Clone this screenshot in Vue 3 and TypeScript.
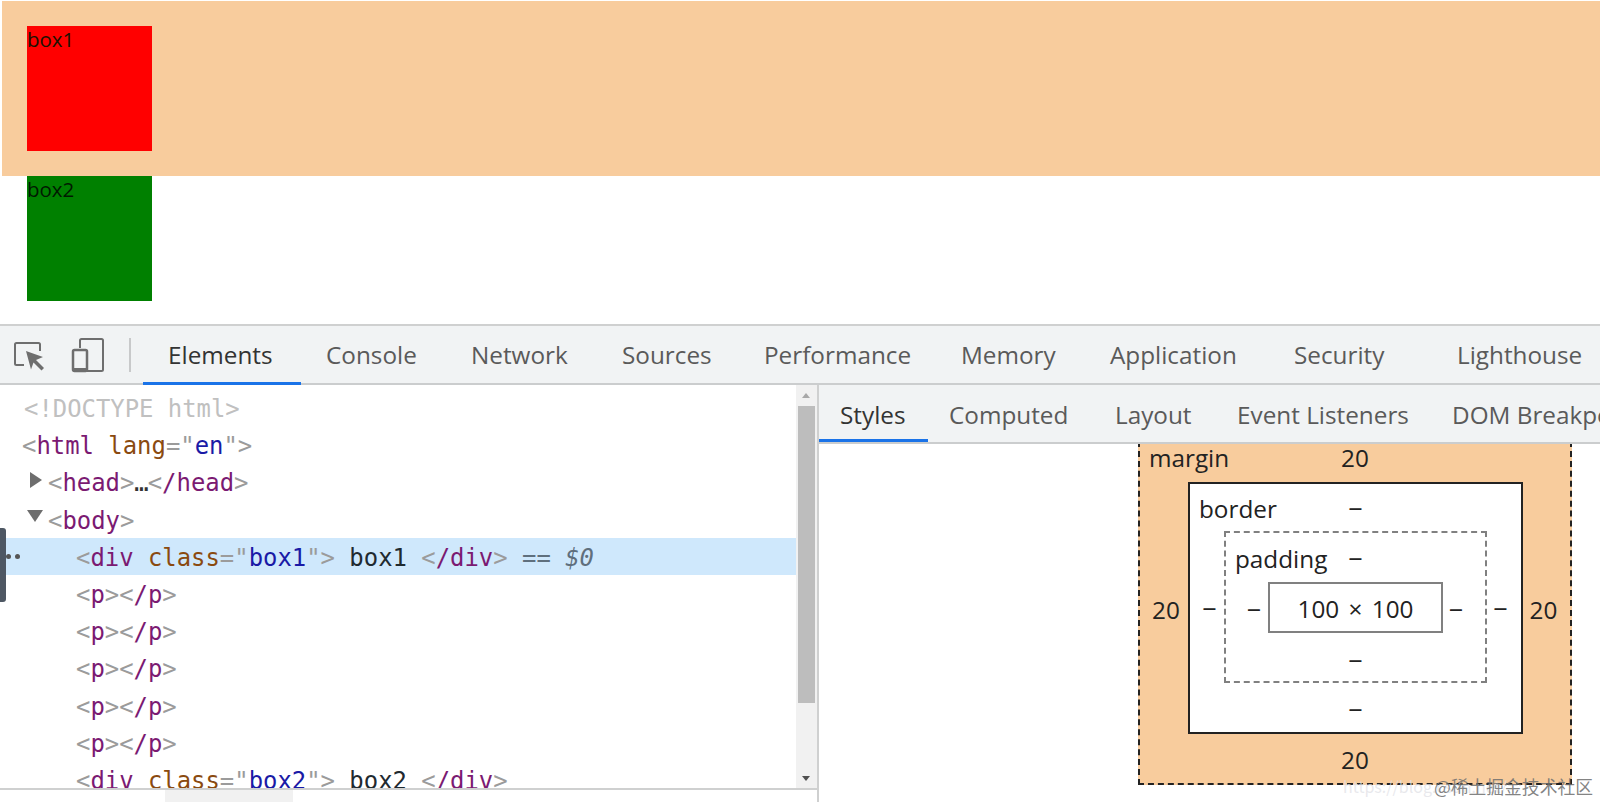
<template>
    <div class="page">
        <div class="preview">
            <div class="box1">
                <div class="box box-red">box1</div>
            </div>
            <div class="box box-green">box2</div>
        </div>

        <div class="devtools">
            <div class="main-bar">
                <div class="tool-icons">
                    <svg class="tool-icon" width="32" height="32" viewBox="0 0 32 32">
                        <path d="M11 26H3.500a1.500 1.500 0 0 1-1.500-1.500V5.500A1.500 1.500 0 0 1 3.500 4h22A1.500 1.500 0 0 1 27 5.500V12" fill="none" stroke="#6e6e6e" stroke-width="2" />
                        <path d="M13 12l17 6-7 3 8 8-2.500 2.500-8-8-2.500 7z" fill="#6e6e6e" />
                    </svg>
                    <svg class="tool-icon device" width="34" height="36" viewBox="0 0 34 36">
                        <path d="M9 11V3.500A1.500 1.500 0 0 1 10.500 2h20A1.500 1.500 0 0 1 32 3.500v29a1.500 1.500 0 0 1-1.500 1.500H16" fill="none" stroke="#6e6e6e" stroke-width="2" />
                        <rect x="2" y="13" width="14" height="21" rx="1.500" fill="none" stroke="#6e6e6e" stroke-width="2.500" />
                        <rect x="2" y="31" width="14" height="3" fill="#6e6e6e" />
                    </svg>
                    <span class="tool-sep"></span>
                </div>
                <div
                    v-for="tab in mainTabs"
                    :key="tab.name"
                    class="tab"
                    :class="{ active: tab.name === 'Elements' }"
                    :style="{ width: tab.width + 'px' }"
                >
                    {{ tab.name }}
                </div>
            </div>

            <div class="panes">
                <div class="dom-pane">
                    <div class="dom-main">
                        <div class="dom-lines">
                            <div class="dom-row doctype indent-0">&lt;!DOCTYPE html&gt;</div>
                            <div class="dom-row indent-root">
                                <i>&lt;</i><b>html</b> <em>lang</em><i>="</i><u>en</u><i>"&gt;</i>
                            </div>
                            <div class="dom-row indent-1">
                                <span class="arrow right"></span>
                                <i>&lt;</i><b>head</b><i>&gt;</i><span class="dots">…</span><i>&lt;</i><b>/head</b><i>&gt;</i>
                            </div>
                            <div class="dom-row indent-1">
                                <span class="arrow down"></span>
                                <i>&lt;</i><b>body</b><i>&gt;</i>
                            </div>
                            <div class="dom-row indent-2 selected">
                                <i>&lt;</i><b>div</b> <em>class</em><i>="</i><u>box1</u><i>"&gt;</i> <span class="txt">box1</span> <i>&lt;</i><b>/div</b><i>&gt;</i> <span class="eq">== $0</span>
                            </div>
                            <div v-for="n in 5" :key="n" class="dom-row indent-2">
                                <i>&lt;</i><b>p</b><i>&gt;&lt;</i><b>/p</b><i>&gt;</i>
                            </div>
                            <div class="dom-row indent-2">
                                <i>&lt;</i><b>div</b> <em>class</em><i>="</i><u>box2</u><i>"&gt;</i> <span class="txt">box2</span> <i>&lt;</i><b>/div</b><i>&gt;</i>
                            </div>
                        </div>
                        <div class="v-scroll">
                            <span class="scroll-up"></span>
                            <div class="v-thumb"></div>
                            <span class="scroll-down"></span>
                        </div>
                    </div>
                    <div class="h-scroll"><div class="h-thumb"></div></div>
                    <div class="handle"></div>
                    <div class="handle-dots">
                        <span></span><span></span>
                    </div>
                </div>

                <div class="side-pane">
                    <div class="side-bar">
                        <div
                            v-for="tab in sideTabs"
                            :key="tab.name"
                            class="tab side-tab"
                            :class="{ active: tab.name === 'Styles' }"
                            :style="{ width: tab.width + 'px' }"
                        >
                            {{ tab.name }}
                        </div>
                    </div>
                    <div class="box-wrap">
                        <div class="bm bm-margin">
                            <span class="bm-label">margin</span>
                            <div class="bm-top">20</div>
                            <div class="bm-mid">
                                <span class="bm-side">20</span>
                                <div class="bm bm-border">
                                    <span class="bm-label">border</span>
                                    <div class="bm-top">‒</div>
                                    <div class="bm-mid">
                                        <span class="bm-side">‒</span>
                                        <div class="bm bm-padding">
                                            <span class="bm-label">padding</span>
                                            <div class="bm-top">‒</div>
                                            <div class="bm-mid">
                                                <span class="bm-side">‒</span>
                                                <div class="bm-content">100 × 100</div>
                                                <span class="bm-side">‒</span>
                                            </div>
                                            <div class="bm-bottom">‒</div>
                                        </div>
                                        <span class="bm-side">‒</span>
                                    </div>
                                    <div class="bm-bottom">‒</div>
                                </div>
                                <span class="bm-side">20</span>
                            </div>
                            <div class="bm-bottom">20</div>
                        </div>
                    </div>
                </div>
            </div>
        </div>

        <div class="watermark">
            <span class="wm-url">https://blog.csdn.net/</span><span class="wm-main">@稀土掘金技术社区</span>
        </div>
    </div>
</template>

<script setup lang="ts">
interface TabItem {
    name: string;
    width: number;
}

const mainTabs: TabItem[] = [
    { name: "Elements", width: 158 },
    { name: "Console", width: 145 },
    { name: "Network", width: 151 },
    { name: "Sources", width: 142 },
    { name: "Performance", width: 197 },
    { name: "Memory", width: 149 },
    { name: "Application", width: 184 },
    { name: "Security", width: 163 },
    { name: "Lighthouse", width: 160 },
];

const sideTabs: TabItem[] = [
    { name: "Styles", width: 109 },
    { name: "Computed", width: 166 },
    { name: "Layout", width: 122 },
    { name: "Event Listeners", width: 215 },
    { name: "DOM Breakpoints", width: 200 },
];
</script>

<style>
html,
body {
    margin: 0;
    background: #ffffff;
    overflow: hidden;
}
</style>

<style scoped>
.page {
    position: relative;
    width: 1600px;
    height: 802px;
    overflow: hidden;
    font-family: "Open Sans", "Noto Sans", sans-serif;
}

.preview {
    height: 324px;
    padding-top: 1px;
    box-sizing: border-box;
    background: #ffffff;
}

.box1 {
    margin-left: 2px;
    padding: 25px;
    height: 175px;
    box-sizing: border-box;
    background: #f8cc9d;
}

.box {
    width: 125px;
    height: 125px;
    font-size: 20.5px;
    line-height: 26px;
    color: #1a1200;
}

.box-red {
    background: #ff0000;
}

.box-green {
    margin-left: 27px;
    background: #008000;
    color: #001a00;
}

.devtools {
    height: 478px;
    display: flex;
    flex-direction: column;
}

.main-bar {
    display: flex;
    height: 61px;
    flex-shrink: 0;
    box-sizing: border-box;
    background: #f1f3f4;
    border-top: 2px solid #cfd0d0;
    border-bottom: 2px solid #cbcdce;
}

.tool-icons {
    position: relative;
    display: flex;
    align-items: center;
    width: 143px;
    flex-shrink: 0;
}

.tool-icon {
    margin-left: 13px;
}

.tool-icon.device {
    margin-left: 26px;
}

.tool-sep {
    width: 2px;
    height: 34px;
    margin-left: 24px;
    background: #c8c9ca;
}

.tab {
    box-sizing: border-box;
    padding-left: 25px;
    flex-shrink: 0;
    height: 59px;
    line-height: 58px;
    font-size: 24.3px;
    color: #5a5a5a;
    white-space: nowrap;
}

.tab.active {
    color: #333333;
    border-bottom: 3px solid #1a73e8;
}

.panes {
    flex: 1;
    display: flex;
    min-height: 0;
}

.dom-pane {
    position: relative;
    width: 817px;
    flex-shrink: 0;
    display: flex;
    flex-direction: column;
}

.dom-main {
    flex: 1;
    display: flex;
    min-height: 0;
    overflow: hidden;
}

.dom-lines {
    flex: 1;
    padding-top: 4px;
    overflow: hidden;
    font-family: "DejaVu Sans Mono", "Liberation Mono", monospace;
    font-size: 23.9px;
    color: #222222;
}

.dom-row {
    position: relative;
    height: 37.2px;
    line-height: 41px;
    white-space: pre;
}

.indent-0 {
    padding-left: 24px;
}

.indent-root {
    padding-left: 22px;
}

.indent-1 {
    padding-left: 48px;
}

.indent-2 {
    padding-left: 76px;
}

.dom-row i {
    font-style: normal;
    color: #9b9b9b;
}

.dom-row b {
    font-weight: 400;
    color: #7b1a72;
}

.dom-row em {
    font-style: normal;
    color: #8a4a10;
}

.dom-row u {
    text-decoration: none;
    color: #1a1aa6;
}

.doctype {
    color: #c0c0c0;
}

.dots {
    color: #333333;
    letter-spacing: -1px;
}

.txt {
    color: #1f2a30;
}

.eq {
    font-style: italic;
    color: #5f6f7d;
}

.selected {
    background: #cfe8fc;
}

.arrow {
    position: absolute;
    width: 0;
    height: 0;
}

.arrow.right {
    left: 30px;
    top: 9px;
    border-top: 8px solid transparent;
    border-bottom: 8px solid transparent;
    border-left: 12px solid #6e6e6e;
}

.arrow.down {
    left: 27px;
    top: 9px;
    border-left: 8px solid transparent;
    border-right: 8px solid transparent;
    border-top: 12px solid #6e6e6e;
}

.v-scroll {
    position: relative;
    width: 21px;
    flex-shrink: 0;
    box-sizing: border-box;
    padding: 21px 2px 0;
    background: #f1f1f1;
}

.v-thumb {
    height: 297px;
    background: #bdbdbd;
}

.scroll-up,
.scroll-down {
    position: absolute;
    left: 6px;
    width: 0;
    height: 0;
    border-left: 4.500px solid transparent;
    border-right: 4.500px solid transparent;
}

.scroll-up {
    top: 8px;
    border-bottom: 5px solid #a8a8a8;
}

.scroll-down {
    bottom: 7px;
    border-top: 5px solid #505050;
}

.h-scroll {
    height: 12px;
    flex-shrink: 0;
    background: #ffffff;
    border-top: 2px solid #cfd0d0;
}

.h-thumb {
    width: 128px;
    height: 100%;
    margin-left: 165px;
    background: #f1f1f1;
}

.handle {
    position: absolute;
    left: 0;
    top: 143px;
    width: 6px;
    height: 74px;
    background: #4e5763;
    border-radius: 0 3px 3px 0;
}

.handle-dots {
    position: absolute;
    left: 6px;
    top: 169px;
    display: flex;
    gap: 4px;
}

.handle-dots span {
    width: 5px;
    height: 5px;
    border-radius: 50%;
    background: #555555;
}

.side-pane {
    flex: 1;
    min-width: 0;
    border-left: 2px solid #cfd0d0;
    display: flex;
    flex-direction: column;
    overflow: hidden;
}

.side-bar {
    position: relative;
    z-index: 1;
    display: flex;
    height: 59px;
    flex-shrink: 0;
    box-sizing: border-box;
    background: #f1f3f4;
    border-bottom: 2px solid #cbcdce;
}

.side-tab {
    padding-left: 21px;
    height: 57px;
    line-height: 59px;
}

.box-wrap {
    padding-left: 319px;
}

.bm {
    position: relative;
    box-sizing: border-box;
    display: flex;
    flex-direction: column;
    font-size: 24.3px;
    color: #222222;
}

.bm > * {
    flex-shrink: 0;
}

.bm-label {
    position: absolute;
    left: 9px;
    line-height: 34px;
    top: 8px;
}

.bm-margin > .bm-label {
    top: -2px;
}

.bm-top {
    text-align: center;
    line-height: 30px;
    height: 38px;
}

.bm-bottom {
    text-align: center;
    line-height: 54px;
    height: 54px;
}

.bm-mid {
    display: flex;
    align-items: center;
}

.bm-side {
    box-sizing: border-box;
    flex: 1;
    text-align: center;
    padding-top: 3px;
}

.bm-side:first-child {
    flex: none;
}

.bm-margin {
    width: 434px;
    height: 344px;
    margin-top: -3px;
    background: #f8cc9d;
    border: 2px dashed #222222;
}

.bm-margin > .bm-top {
    height: 39px;
}

.bm-margin > .bm-bottom {
    line-height: 52px;
    height: 52px;
}

.bm-margin > .bm-mid > .bm-side:first-child {
    width: 48px;
    padding-left: 4px;
}

.bm-margin > .bm-mid > .bm-side:last-child {
    padding-right: 6px;
}

.bm-border {
    width: 335px;
    height: 252px;
    background: #ffffff;
    border: 2px solid #222222;
    padding-top: 9px;
}

.bm-border > .bm-top {
    line-height: 32px;
}

.bm-border > .bm-mid > .bm-side:first-child {
    width: 34px;
    padding-left: 5px;
}

.bm-border > .bm-mid > .bm-side:last-child {
    padding-right: 7px;
}

.bm-padding {
    width: 263px;
    height: 152px;
    border: 2px dashed #808080;
    padding-top: 11px;
}

.bm-padding > .bm-label {
    top: 9px;
}

.bm-padding > .bm-mid > .bm-side:first-child {
    width: 42px;
    padding-left: 14px;
}

.bm-padding > .bm-mid > .bm-side:last-child {
    padding-right: 16px;
}

.bm-padding > .bm-bottom {
    line-height: 56px;
    height: 56px;
}

.bm-content {
    width: 175px;
    height: 51px;
    box-sizing: border-box;
    border: 2px solid #808080;
    text-align: center;
    line-height: 50px;
    word-spacing: 3px;
}

.watermark {
    position: absolute;
    right: 7px;
    bottom: 4px;
    display: flex;
    align-items: center;
    font-family: "Noto Sans CJK SC", "Noto Sans", sans-serif;
    font-size: 17.8px;
    line-height: 24px;
    white-space: nowrap;
}

.wm-url {
    font-size: 16px;
    color: rgba(225, 225, 230, 0.75);
}

.wm-main {
    margin-left: -73px;
    color: rgba(110, 110, 110, 0.85);
}
</style>
